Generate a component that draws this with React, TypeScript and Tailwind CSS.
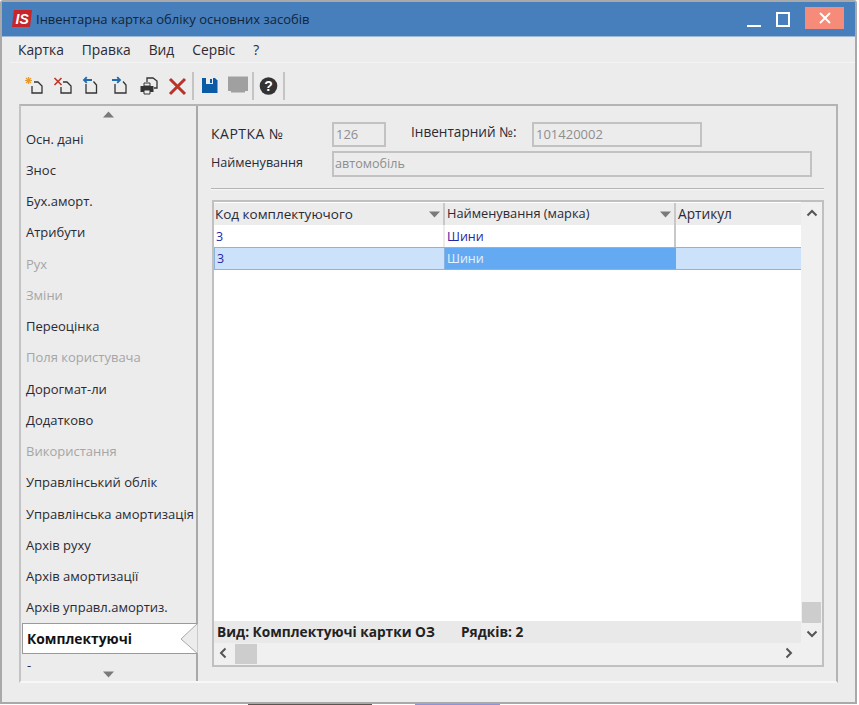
import { X } from "lucide-react";

const tabs = [
  { name: "Осн. дані" },
  { name: "Знос" },
  { name: "Бух.аморт." },
  { name: "Атрибути" },
  { name: "Рух", off: true },
  { name: "Зміни", off: true },
  { name: "Переоцінка" },
  { name: "Поля користувача", off: true },
  { name: "Дорогмат-ли" },
  { name: "Додатково" },
  { name: "Використання", off: true },
  { name: "Управлінський облік" },
  { name: "Управлінська амортизація" },
  { name: "Архів руху" },
  { name: "Архів амортизації" },
  { name: "Архів управл.амортиз." },
];

const ToolIcon = ({ children, className = "" }: { children: React.ReactNode; className?: string }) => (
  <svg width="20" height="20" viewBox="0 0 20 20" className={`shrink-0 ${className}`}>
    {children}
  </svg>
);

const Sep = ({ className = "" }: { className?: string }) => (
  <div className={`w-[2px] h-[28px] bg-[#c4c4c4] shrink-0 ${className}`} />
);

const Caret = ({ up = false }: { up?: boolean }) => (
  <svg width="11" height="7" viewBox="0 0 11 7">
    <path d={up ? "M5.5 0.5L11 6.5H0z" : "M0 0.5h11L5.5 6.5z"} fill="#7a7a7a" />
  </svg>
);

const Chevron = ({ d }: { d: string }) => (
  <svg width="12" height="12" viewBox="0 0 12 12">
    <path d={d} fill="none" stroke="#555" strokeWidth="2" />
  </svg>
);

export default function App() {
  return (
    <div className="w-[859px] h-[705px] bg-white overflow-hidden text-[13px] text-[#2a2a35] font-['Open_Sans','Noto_Sans',sans-serif]">
      <div className="w-[857px] h-[704px] flex flex-col bg-[#ececec] border-2 border-[#a9a9a9] rounded-t-[3px]">
        {/* Title bar */}
        <div className="h-[35px] shrink-0 flex items-center bg-[#467fbb] text-[#10243c] border-b border-[#9db9d6]">
          <svg width="20" height="17" viewBox="0 0 20 17" className="ml-[10px] mr-[4px] mb-[2px]">
            <path d="M2 0h18l-2 17H0z" fill="#c8252b" />
            <text x="3.5" y="14" fill="#fff" fontSize="14" fontWeight="700" fontStyle="italic" fontFamily="Liberation Sans, sans-serif">
              IS
            </text>
          </svg>
          <span className="text-[13px] pt-px">Інвентарна картка обліку основних засобів</span>
          <div className="ml-auto flex items-center">
            <div className="w-[14px] h-[2px] bg-white mt-[14px] mr-[15px]" />
            <div className="w-[14px] h-[15px] border-2 border-white mr-[15px] mt-[1px]" />
            <div className="w-[39px] h-[22px] bg-[#f58b78] flex items-center justify-center mr-[11px] mt-[-3px]">
              <X size={18} color="#fff" strokeWidth={2.5} />
            </div>
          </div>
        </div>

        {/* Menu */}
        <div className="h-[25px] shrink-0 flex items-center gap-[18px] pl-[16px] pt-[1px] text-[13.8px]">
          <span>Картка</span>
          <span>Правка</span>
          <span>Вид</span>
          <span>Сервіс</span>
          <span>?</span>
        </div>
        <div className="h-px ml-[8px] bg-[#f4f4f4] shrink-0" />

        {/* Toolbar */}
        <div className="h-[40px] shrink-0 flex items-center pl-[22px] pt-[5px]">
          <ToolIcon>
            <path d="M2 2l5 5M7 2L2 7M4.5 1v7M1 4.5h7" stroke="#e59a2e" strokeWidth="1.2" />
            <path d="M10 6h4l4 4v7H8v-7" fill="none" stroke="#333" strokeWidth="1.3" />
          </ToolIcon>
          <ToolIcon className="ml-[9px]">
            <path d="M1.5 2l7 7M8.5 2l-7 7" stroke="#c0392b" strokeWidth="1.7" />
            <path d="M10 6h4l4 4v7H8v-6" fill="none" stroke="#333" strokeWidth="1.3" />
          </ToolIcon>
          <ToolIcon className="ml-[9px]">
            <path d="M10 4H2M4.8 1.2L2 4l2.8 2.8" fill="none" stroke="#1f6cb0" strokeWidth="1.8" />
            <path d="M4 8v9h10.5V9l-3-3.5" fill="none" stroke="#333" strokeWidth="1.3" />
          </ToolIcon>
          <ToolIcon className="ml-[9px]">
            <path d="M1 4h8M6.2 1.2L9 4 6.2 6.8" fill="none" stroke="#1f6cb0" strokeWidth="1.8" />
            <path d="M4 8v9h11V9l-3-3.5" fill="none" stroke="#333" strokeWidth="1.3" />
          </ToolIcon>
          <ToolIcon className="ml-[8px]">
            <path d="M8 6V2h6l4 3v7h-3" fill="none" stroke="#333" strokeWidth="1.3" />
            <path d="M1.5 10h13v6h-13z" fill="#333" />
            <path d="M5 7h6v3H5zM5 14h6v4H5z" fill="#ececec" stroke="#333" />
          </ToolIcon>
          <ToolIcon className="ml-[9px]">
            <path d="M2 3l15 15M17 3L2 18" stroke="#b8342a" strokeWidth="3" />
          </ToolIcon>
          <Sep className="ml-[4px]" />
          <ToolIcon className="ml-[6px]">
            <path d="M2 2h13l2.5 2.5V17H2z" fill="#0b5aa6" />
            <path d="M6 2h7v6H6z" fill="#ececec" />
            <path d="M10 3h2v4h-2z" fill="#0b5aa6" />
          </ToolIcon>
          <ToolIcon className="ml-[8px]">
            <path d="M0 0.5h20v14.5h-3v1.5H3V15H0z" fill="#a0a0a0" />
          </ToolIcon>
          <Sep className="ml-[4px]" />
          <ToolIcon className="ml-[5px]">
            <circle cx="9.5" cy="10" r="8.8" fill="#333" />
            <text x="9.5" y="15" textAnchor="middle" fill="#fff" fontSize="14" fontWeight="700" fontFamily="Liberation Sans, sans-serif">
              ?
            </text>
          </ToolIcon>
          <Sep className="ml-[4px]" />
        </div>

        {/* Main frame */}
        <div className="mx-[17px] mt-px h-[579px] flex border-2 border-[#b4b4b4] border-b-[#f7f7f7] border-l-[#c4c4c4]">
          {/* Side tabs */}
          <div className="w-[177px] shrink-0 flex flex-col border-r-2 border-[#a9a9a9] relative">
            <div className="h-[17.75px] flex items-center justify-center shrink-0">
              <Caret up />
            </div>
            {tabs.map((t) => (
              <div
                key={t.name}
                className={`h-[31.25px] shrink-0 flex items-center pl-[5px] whitespace-nowrap ${t.off ? "text-[#a6a6a6]" : ""}`}
              >
                {t.name}
              </div>
            ))}
            <div className="h-[31px] -mt-[0.5px] ml-px shrink-0 flex items-center pl-[4px] pt-px -mr-[2px] bg-white border border-[#9a9a9a] border-r-0 relative z-10 font-bold text-[13.8px] text-[#111]">
              Комплектуючі
              <svg width="18" height="31" viewBox="0 0 18 31" className="absolute right-0 top-[-1px]">
                <path d="M18 0L1 16l17 15z" fill="#ececec" stroke="#a9a9a9" />
              </svg>
            </div>
            <div className="h-[14px] pl-[6px] leading-[14px] mt-[4px]">-</div>
            <div className="flex justify-center -mt-px">
              <Caret />
            </div>
          </div>

          {/* Card */}
          <div className="flex-1 flex flex-col pl-[13px] pr-[12px] pt-[16px]">
            <div className="flex items-center h-[25px]">
              <span className="w-[121px] pb-[3px] text-[14px] tracking-[0.5px]">КАРТКА №</span>
              <div className="w-[54px] h-[25px] border-2 border-[#c2c2c2] text-[#8e8e8e] flex items-center pl-[2px]">126</div>
              <span className="w-[121px] ml-[25px] pb-[4px] text-[13.6px] whitespace-nowrap">Інвентарний №:</span>
              <div className="w-[170px] h-[25px] border-2 border-[#c2c2c2] text-[#8e8e8e] flex items-center pl-[2px]">101420002</div>
            </div>
            <div className="flex items-center h-[26px] mt-[4px] text-[12.6px]">
              <span className="w-[121px] pb-[2px]">Найменування</span>
              <div className="w-[480px] h-[26px] border-2 border-[#c2c2c2] text-[#8e8e8e] flex items-center pl-px pt-px">автомобіль</div>
            </div>
            <div className="h-[2px] bg-[#b4b4b4] mt-[11px] border-b border-[#f7f7f7]" />

            {/* Grid */}
            <div className="mt-[10px] ml-px h-[467px] border-2 border-[#c0c0c0] flex flex-col bg-[#f0f0f0]">
              <div className="flex-1 flex min-h-0">
                <div className="flex-1 flex flex-col min-w-0 bg-white">
                  <div className="h-[22px] mt-px flex bg-[#ececec] shrink-0">
                    <div className="w-[231px] flex items-center justify-between pl-px pr-[3px] border-r-2 border-[#c8c8c8] text-[13.5px]">
                      Код комплектуючого
                      <Caret />
                    </div>
                    <div className="w-[231px] flex items-center justify-between pl-[2px] pr-[3px] border-r-2 border-[#c8c8c8] text-[12.8px]">
                      Найменування (марка)
                      <Caret />
                    </div>
                    <div className="flex-1 flex items-center pl-[2px] text-[13.7px]">Артикул</div>
                  </div>
                  <div className="h-[22px] flex text-[12.5px] text-[#2626a4] shrink-0">
                    <div className="w-[231px] flex items-center pl-[2px] pt-[2px] border-r-2 border-[#ececec]">3</div>
                    <div className="w-[231px] flex items-center pl-[2px] pt-[2px] border-r-2 border-[#c8c8c8]">Шини</div>
                    <div className="flex-1" />
                  </div>
                  <div className="h-[23px] flex text-[12.5px] text-[#2626a4] bg-[#cce2fb] border-y border-[#8db2de] shrink-0">
                    <div className="w-[231px] flex items-center pl-[2px] pt-[2px] border-x border-[#8db2de]">3</div>
                    <div className="w-[231px] flex items-center pl-[2px] pt-[2px] bg-[#64aaf3] text-[#e8f2fc]">Шини</div>
                    <div className="flex-1" />
                  </div>
                  <div className="flex-1" />
                  <div className="h-[22px] flex items-center bg-[#e9e9e9] pl-[3px] font-bold text-[13.7px] text-[#222] shrink-0">
                    <span className="w-[244px]">Вид: Комплектуючі картки ОЗ</span>
                    <span>Рядків: 2</span>
                  </div>
                </div>
                <div className="w-[21px] shrink-0 flex flex-col items-center bg-[#f0f0f0]">
                  <div className="mt-[5px]">
                    <Chevron d="M1.5 8.5L6 4l4.5 4.5" />
                  </div>
                  <div className="flex-1" />
                  <div className="w-[19px] h-[21px] bg-[#cdcdcd] mb-[5px]" />
                  <div className="mb-[3px]">
                    <Chevron d="M1.5 3.5L6 8l4.5-4.5" />
                  </div>
                </div>
              </div>
              <div className="h-[22px] shrink-0 flex items-center bg-[#f0f0f0]">
                <div className="ml-[3px] w-[18px] pb-[2px]">
                  <Chevron d="M8.5 1.5L4 6l4.5 4.5" />
                </div>
                <div className="w-[22px] h-[20px] bg-[#cdcdcd]" />
                <div className="flex-1" />
                <div className="mr-[27px] pb-[2px]">
                  <Chevron d="M3.5 1.5L8 6l-4.5 4.5" />
                </div>
              </div>
            </div>
          </div>
        </div>
      </div>
      {/* edge of whatever is behind the window */}
      <div className="h-px flex">
        <div className="w-[124px] ml-[248px] bg-[#5a5550]" />
        <div className="w-[85px] ml-[43px] bg-[#8f93d8]" />
      </div>
    </div>
  );
}
